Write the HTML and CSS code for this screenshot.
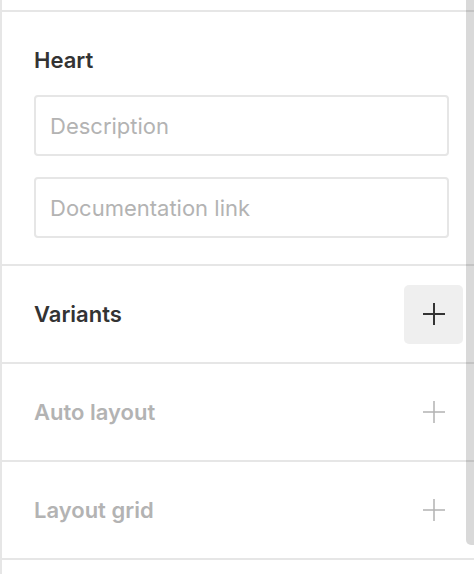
FILE: index.html
```html
<!DOCTYPE html>
<html lang="en">
<head>
<meta charset="utf-8">
<title>Component properties</title>
<link rel="stylesheet" href="styles.css">
</head>
<body>
<div class="panel">
  <div class="prev-section"></div>
  <section class="info">
    <h2 class="info-title">Heart</h2>
    <input class="field" type="text" placeholder="Description">
    <input class="field" type="text" placeholder="Documentation link">
  </section>
  <section class="row">
    <span class="row-title">Variants</span>
    <button class="add-btn add-btn--active" type="button" aria-label="Add variant">
      <svg width="22" height="22" viewBox="0 0 22 22"><path d="M0 11H22M11 0V22" stroke="#333333" stroke-width="2" fill="none"/></svg>
    </button>
  </section>
  <section class="row row--muted">
    <span class="row-title">Auto layout</span>
    <button class="add-btn" type="button" aria-label="Add auto layout">
      <svg width="22" height="22" viewBox="0 0 22 22"><path d="M0 11H22M11 0V22" stroke="#b3b3b3" stroke-width="1.5" fill="none"/></svg>
    </button>
  </section>
  <section class="row row--muted">
    <span class="row-title">Layout grid</span>
    <button class="add-btn" type="button" aria-label="Add layout grid">
      <svg width="22" height="22" viewBox="0 0 22 22"><path d="M0 11H22M11 0V22" stroke="#b3b3b3" stroke-width="1.5" fill="none"/></svg>
    </button>
  </section>
  <div class="scrollbar"></div>
</div>
</body>
</html>
```
FILE: styles.css
```css
html, body {
  margin: 0;
  padding: 0;
  background: #ffffff;
}

body {
  font-family: Inter, "Noto Sans", "Liberation Sans", sans-serif;
  color: #333333;
}

.panel {
  position: relative;
  width: 474px;
  height: 574px;
  box-sizing: border-box;
  border-left: 2px solid #e6e6e6;
  overflow: hidden;
  display: flex;
  flex-direction: column;
}

.prev-section {
  height: 10px;
  flex: none;
  border-bottom: 2px solid #e6e6e6;
}

.info {
  flex: none;
  display: flex;
  flex-direction: column;
  gap: 21px;
  padding: 32px 25px 26px 32px;
  border-bottom: 2px solid #e6e6e6;
}

.info-title {
  margin: 0 0 -2px 0;
  font-size: 22px;
  line-height: 32px;
  font-weight: 600;
  color: #333333;
}

.field {
  display: block;
  box-sizing: border-box;
  width: 100%;
  height: 61px;
  margin: 0;
  padding: 0 14px;
  border: 2px solid #e6e6e6;
  border-radius: 4px;
  background: #ffffff;
  font-family: Inter, "Noto Sans", "Liberation Sans", sans-serif;
  font-size: 22px;
  color: #333333;
  outline: none;
}

.field::placeholder {
  color: #b3b3b3;
  opacity: 1;
}

.row {
  flex: none;
  height: 96px;
  display: flex;
  align-items: center;
  justify-content: space-between;
  padding: 0 11px 0 32px;
  border-bottom: 2px solid #e6e6e6;
}

.row-title {
  font-size: 22px;
  line-height: 32px;
  font-weight: 600;
  color: #333333;
}

.row--muted .row-title {
  color: #b3b3b3;
}

.add-btn {
  width: 59px;
  height: 59px;
  padding: 0;
  border: none;
  border-radius: 5px;
  background: transparent;
  display: flex;
  align-items: center;
  justify-content: center;
}

.add-btn svg {
  display: block;
}

.add-btn--active {
  background: #efefef;
}

.scrollbar {
  position: absolute;
  top: 0;
  right: 0;
  width: 8px;
  height: 545px;
  background: rgba(0, 0, 0, 0.15);
  border-bottom-left-radius: 5px;
}
```
